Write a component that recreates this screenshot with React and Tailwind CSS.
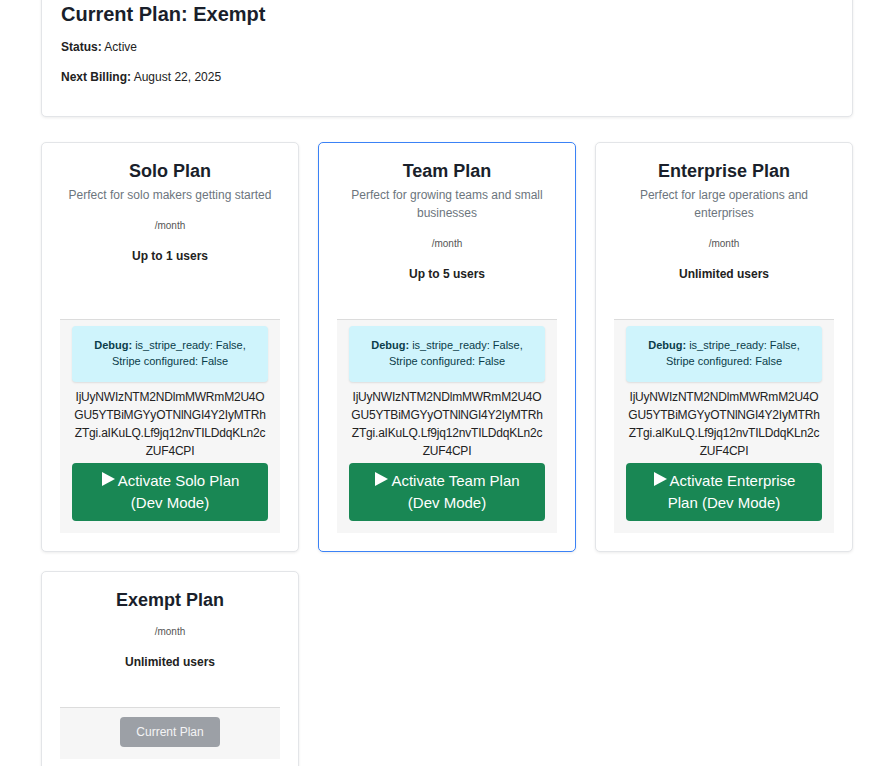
const plans = [
  {
    name: 'Solo Plan',
    desc: 'Perfect for solo makers getting started',
    users: 'Up to 1 users',
    action: 'Activate Solo Plan (Dev Mode)',
  },
  {
    name: 'Team Plan',
    desc: 'Perfect for growing teams and small businesses',
    users: 'Up to 5 users',
    action: 'Activate Team Plan (Dev Mode)',
    active: true,
  },
  {
    name: 'Enterprise Plan',
    desc: 'Perfect for large operations and enterprises',
    users: 'Unlimited users',
    action: 'Activate Enterprise Plan (Dev Mode)',
  },
];

const token = 'IjUyNWIzNTM2NDlmMWRmM2U4OGU5YTBiMGYyOTNlNGI4Y2IyMTRhZTgi.aIKuLQ.Lf9jq12nvTILDdqKLn2cZUF4CPI';

const Play = () => (
  <svg width="15" height="16" viewBox="0 0 15 16" className="inline-block align-[-1px] mr-[2px]">
    <path d="M1 1 L14 8 L1 15 Z" fill="white" />
  </svg>
);

const PlanCard = ({plan, current}) => (
  <div
    className={
      'flex flex-col bg-white rounded-[5px] px-[18px] pt-[16px] pb-[18px] shadow-[0_1px_3px_rgba(0,0,0,0.08)] border ' +
      (plan.active ? 'border-[#3b82f6]' : 'border-[#e3e5e8]')
    }
  >
    <div className="text-center pb-[36px]">
      <h3 className="text-[18px] leading-[24px] font-bold text-[#1a1f2b]">{plan.name}</h3>
      {plan.desc && (
        <p className="mt-[3px] text-[12px] leading-[18px] text-[#6c757d]">{plan.desc}</p>
      )}
      <p className={(plan.desc ? 'mt-[14px]' : 'mt-[12px]') + ' text-[10px] leading-[16px] text-[#555]'}>
        /month
      </p>
      <p className="mt-[13px] text-[12px] leading-[18px] font-bold text-[#222]">{plan.users}</p>
    </div>
    <div className="mt-auto border-t border-[#dcdcdc] bg-[#f6f6f6] px-[12px] pt-[6px] pb-[12px]">
      {current ? (
        <div className="flex justify-center pt-[3px]">
          <button className="bg-[#9ca0a6] text-[#f4f4f5] text-[12px] leading-[16px] rounded-[4px] px-[16px] py-[7px]">
            Current Plan
          </button>
        </div>
      ) : (
        <>
          <div className="bg-[#cff4fc] rounded-[4px] shadow-[0_1px_2px_rgba(0,0,0,0.1)] text-[#0b3d4a] text-[11px] leading-[16px] text-center px-[10px] pt-[11px] pb-[13px]">
            <b>Debug:</b> is_stripe_ready: False, Stripe configured: False
          </div>
          <p className="mt-[6px] text-[12px] leading-[18px] tracking-[-0.2px] text-[#222] text-center break-all">
            {token}
          </p>
          <button className="mt-[3px] w-full bg-[#198754] text-white text-[15px] leading-[22px] rounded-[4px] px-[12px] py-[7px] text-center">
            <Play />
            {plan.action}
          </button>
        </>
      )}
    </div>
  </div>
);

export default function App() {
  return (
    <div className="min-h-screen bg-white font-['Liberation_Sans',Arial,sans-serif] pl-[41px] pr-[30px] pb-[20px]">
      <div className="-mt-[10px] bg-white border border-[#e3e5e8] rounded-[5px] shadow-[0_1px_3px_rgba(0,0,0,0.08)] px-[19px] pt-[11px] pb-[31px]">
        <h2 className="text-[20px] leading-[24px] font-bold text-[#1a1f2b]">Current Plan: Exempt</h2>
        <p className="mt-[13px] text-[12px] leading-[16px] text-[#222]">
          <b>Status:</b> Active
        </p>
        <p className="mt-[14px] text-[12px] leading-[16px] text-[#222]">
          <b>Next Billing:</b> August 22, 2025
        </p>
      </div>
      <div className="mt-[25px] grid grid-cols-3 gap-[19px]">
        {plans.map((p) => (
          <PlanCard key={p.name} plan={p} />
        ))}
        <PlanCard plan={{name: 'Exempt Plan', users: 'Unlimited users'}} current />
      </div>
    </div>
  );
}
